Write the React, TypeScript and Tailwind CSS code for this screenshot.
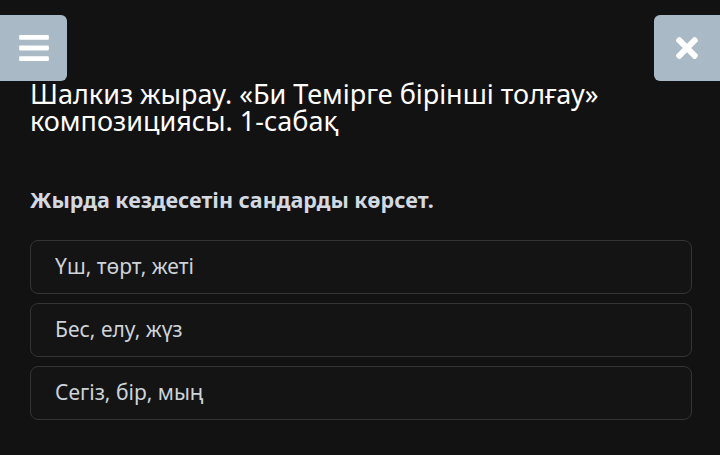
import React from 'react';
import { FaBars, FaTimes } from 'react-icons/fa';

const options = ['Үш, төрт, жеті', 'Бес, елу, жүз', 'Сегіз, бір, мың'];

const App = () => {
  return (
    <div className="w-full h-[455px] bg-[#121212] overflow-hidden" style={{ fontFamily: '"Noto Sans", "Open Sans", sans-serif' }}>
      <div className="flex justify-between pt-[15px]">
        <button className="w-[67px] h-[66px] bg-[#a9bac6] rounded-r-[6px] flex items-center justify-center text-white">
          <FaBars className="w-[34px] h-[34px]" />
        </button>
        <button className="w-[66px] h-[66px] bg-[#a9bac6] rounded-l-[6px] flex items-center justify-center text-white">
          <FaTimes className="w-[32px] h-[32px]" />
        </button>
      </div>

      <div className="px-[30px]">
        <h1 className="-mt-[1px] text-[27px] leading-[27px] text-white font-normal">
          Шалкиз жырау. «Би Темірге бірінші толғау» композициясы. 1-сабақ
        </h1>

        <p className="mt-[52px] text-[21.5px] leading-[28px] font-bold text-[#d3d9e0]">
          Жырда кездесетін сандарды көрсет.
        </p>

        <div className="mt-[26px] flex flex-col gap-[9px] w-[662px]">
          {options.map((o) => (
            <div key={o} className="h-[54px] border border-[#333436] rounded-[8px] bg-[#141414] flex items-center px-[24px] text-[21px] text-[#cdd3d9]">
              {o}
            </div>
          ))}
        </div>
      </div>
    </div>
  );
};

export default App;
